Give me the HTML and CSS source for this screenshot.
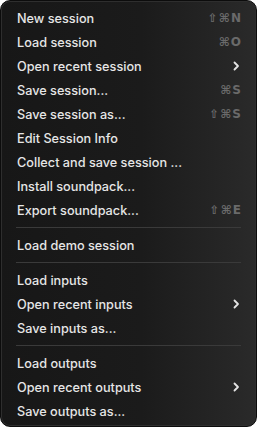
FILE: index.html
```html
<!DOCTYPE html>
<html lang="en">
<head>
    <meta charset="UTF-8">
    <meta name="viewport" content="width=device-width, initial-scale=1.0">
    <title>Session Menu</title>
    <link rel="stylesheet" href="styles.css">
</head>
<body>
    <div class="menu">
        <div class="item"><span>New session</span><span class="keys">⇧⌘N</span></div>
        <div class="item"><span>Load session</span><span class="keys">⌘O</span></div>
        <div class="item"><span>Open recent session</span>
            <svg class="chev" width="7" height="10" viewBox="0 0 7 10"><path d="M1.5 1.5 L5 5 L1.5 8.5" fill="none" stroke="#e4e4e4" stroke-width="1.8" stroke-linecap="round" stroke-linejoin="round"/></svg>
        </div>
        <div class="item"><span>Save session...</span><span class="keys">⌘S</span></div>
        <div class="item"><span>Save session as...</span><span class="keys">⇧⌘S</span></div>
        <div class="item"><span>Edit Session Info</span></div>
        <div class="item"><span>Collect and save session ...</span></div>
        <div class="item"><span>Install soundpack...</span></div>
        <div class="item"><span>Export soundpack...</span><span class="keys">⇧⌘E</span></div>
        <div class="sep"></div>
        <div class="item"><span>Load demo session</span></div>
        <div class="sep"></div>
        <div class="item"><span>Load inputs</span></div>
        <div class="item"><span>Open recent inputs</span>
            <svg class="chev" width="7" height="10" viewBox="0 0 7 10"><path d="M1.5 1.5 L5 5 L1.5 8.5" fill="none" stroke="#e4e4e4" stroke-width="1.8" stroke-linecap="round" stroke-linejoin="round"/></svg>
        </div>
        <div class="item"><span>Save inputs as...</span></div>
        <div class="sep"></div>
        <div class="item"><span>Load outputs</span></div>
        <div class="item"><span>Open recent outputs</span>
            <svg class="chev" width="7" height="10" viewBox="0 0 7 10"><path d="M1.5 1.5 L5 5 L1.5 8.5" fill="none" stroke="#e4e4e4" stroke-width="1.8" stroke-linecap="round" stroke-linejoin="round"/></svg>
        </div>
        <div class="item"><span>Save outputs as...</span></div>
    </div>
</body>
</html>
```

FILE: styles.css
```css
html, body {
    margin: 0;
    padding: 0;
    background-color: #ffffff;
}
body {
    font-family: Inter, "Noto Sans", sans-serif;
}
.menu {
    width: 257px;
    height: 427px;
    box-sizing: border-box;
    padding: 5px 15px 0 15px;
    border: 1px solid #0c0c0c;
    border-radius: 10px;
    background: linear-gradient(90deg, #171717 0%, #1b1b1b 55%, #2a2a2a 100%);
    box-shadow: inset 0 0 0 1px #2e2e2e;
    display: flex;
    flex-direction: column;
}
.item {
    height: 24px;
    display: flex;
    align-items: center;
    justify-content: space-between;
    color: #e6e6e6;
    font-size: 12.7px;
    font-weight: 500;
    padding-left: 1px;
}
.keys {
    color: #6a6a6a;
    font-family: "DejaVu Sans", sans-serif;
    font-weight: bold;
    font-size: 12px;
    letter-spacing: 1px;
    margin-right: -1px;
}
.chev {
    margin-right: 1px;
}
.sep {
    height: 11px;
    display: flex;
    align-items: center;
}
.sep::before {
    content: "";
    flex: 1;
    height: 1px;
    background-color: #3a3a3a;
}
```
